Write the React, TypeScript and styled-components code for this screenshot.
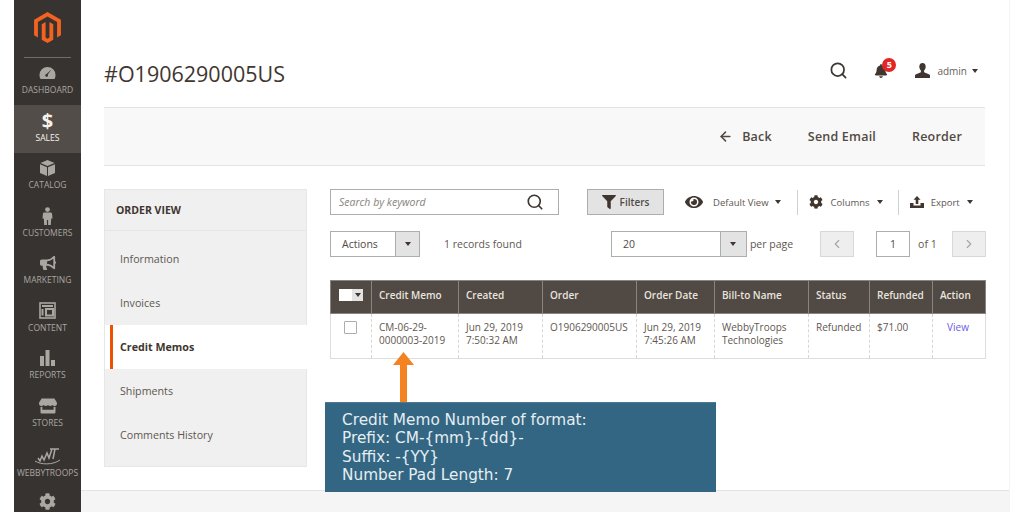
import React from "react";
import styled, { createGlobalStyle } from "styled-components";
import { SiMagento } from "react-icons/si";
import { FaBell, FaBullhorn, FaCog, FaEye, FaFilter, FaStore } from "react-icons/fa";
import { ArrowLeft, ChevronLeft, ChevronRight, Search } from "lucide-react";

const GlobalStyle = createGlobalStyle`
  html, body {
    margin: 0;
    padding: 0;
    background: #ffffff;
    font-family: "Open Sans", "Liberation Sans", sans-serif;
    color: #41362f;
  }
  * { box-sizing: border-box; }
`;

const Shell = styled.div`
  display: flex;
  height: 512px;
  width: 1024px;
  padding: 0 15px 0 14px;
  overflow: hidden;
  position: relative;
`;

const Sidebar = styled.nav`
  width: 67px;
  flex: none;
  background: #373330;
  display: flex;
  flex-direction: column;
  align-items: stretch;
`;

const LogoBox = styled.div`
  height: 56.5px;
  flex: none;
  padding-top: 12px;
  display: flex;
  justify-content: center;
  color: #f26322;
  font-size: 31px;
`;

const SideRule = styled.div`
  height: 1px;
  flex: none;
  margin: 0 10px;
  background: #736c64;
`;

const SideItem = styled.div<{ $active?: boolean; $tall?: boolean }>`
  height: ${(p) => (p.$tall ? "50px" : "47.5px")};
  flex: none;
  display: flex;
  flex-direction: column;
  align-items: center;
  justify-content: flex-end;
  padding-bottom: 10px;
  background: ${(p) => (p.$active ? "#524d49" : "transparent")};
  color: ${(p) => (p.$active ? "#f7f3eb" : "#aaa6a0")};
`;

const SideGear = styled.div`
  flex: none;
  display: flex;
  justify-content: center;
  padding-top: 5px;
  color: #aaa6a0;
`;

const SideIcon = styled.div`
  height: 22px;
  display: flex;
  align-items: center;
  justify-content: center;
  font-size: 16px;
`;

const Dollar = styled.span`
  font-size: 20px;
  font-weight: 700;
  line-height: 22px;
`;

const SideLabel = styled.span`
  font-size: 8.5px;
  line-height: 11px;
  text-transform: uppercase;
  white-space: nowrap;
`;

const Main = styled.main`
  flex: 1;
  min-width: 0;
  display: flex;
  flex-direction: column;
`;

const PageHeader = styled.header`
  height: 107px;
  flex: none;
  display: flex;
  align-items: center;
  padding: 40px 31px 0 23px;
`;

const Title = styled.h1`
  margin: 0;
  flex: 1;
  font-size: 21.5px;
  font-weight: 400;
  color: #41362f;
`;

const HeaderTools = styled.div`
  display: flex;
  align-items: center;
  margin-top: -6px;
`;

const BellWrap = styled.div`
  position: relative;
  margin: 0 27px 0 26px;
  display: flex;
  font-size: 14px;
  color: #41362f;
`;

const Badge = styled.span`
  position: absolute;
  top: -6px;
  left: 8px;
  width: 14px;
  height: 14px;
  border-radius: 50%;
  background: #e22626;
  color: #fff;
  font-size: 9px;
  font-weight: 700;
  line-height: 14px;
  text-align: center;
`;

const AdminName = styled.span`
  font-size: 10px;
  margin: 0 5px 0 7px;
  color: #675f58;
`;

const Caret = styled.span<{ $gap?: number }>`
  width: 0;
  height: 0;
  flex: none;
  margin-left: ${(p) => p.$gap ?? 0}px;
  border-left: 3.5px solid transparent;
  border-right: 3.5px solid transparent;
  border-top: 4px solid #41362f;
`;

const ActionBar = styled.div`
  height: 59px;
  flex: none;
  margin: 0 24px 0 23px;
  padding-right: 23px;
  background: #f8f8f8;
  border-top: 1px solid #e3e3e3;
  border-bottom: 1px solid #e3e3e3;
  display: flex;
  align-items: center;
  justify-content: flex-end;
  gap: 36px;
`;

const BarAction = styled.span`
  display: flex;
  align-items: center;
  gap: 9px;
  font-size: 12.5px;
  font-weight: 600;
  letter-spacing: 0.2px;
  color: #514943;
`;

const Content = styled.div`
  flex: 1;
  display: flex;
  gap: 23px;
  margin: 23px 23px 0 23px;
`;

const OrderPanel = styled.aside`
  width: 203px;
  height: 278px;
  flex: none;
  background: #f0f0f0;
  border: 1px solid #e6e6e6;
`;

const PanelTitle = styled.div`
  height: 41px;
  display: flex;
  align-items: center;
  padding-left: 11px;
  font-size: 10.5px;
  font-weight: 700;
  color: #41362f;
  border-bottom: 1px solid #e6e6e6;
`;

const PanelList = styled.div`
  padding-top: 6px;
`;

const PanelItem = styled.div<{ $active?: boolean }>`
  height: 44px;
  display: flex;
  align-items: stretch;
  padding-left: 5px;
  background: ${(p) => (p.$active ? "#ffffff" : "transparent")};
  margin-right: ${(p) => (p.$active ? "-1px" : "0")};
`;

const PanelLabel = styled.span<{ $active?: boolean }>`
  flex: 1;
  display: flex;
  align-items: center;
  padding-left: ${(p) => (p.$active ? "7px" : "10px")};
  border-left: ${(p) => (p.$active ? "3px solid #eb5202" : "none")};
  font-size: 10.7px;
  font-weight: ${(p) => (p.$active ? 700 : 400)};
  color: ${(p) => (p.$active ? "#41362f" : "#5e5751")};
`;

const GridArea = styled.section`
  flex: 1;
  min-width: 0;
`;

const ToolRow = styled.div`
  display: flex;
  align-items: center;
  height: 26px;
`;

const PagerRow = styled(ToolRow)`
  margin-top: 16px;
`;

const SearchBox = styled.div`
  width: 229px;
  height: 26px;
  flex: none;
  display: flex;
  align-items: center;
  justify-content: space-between;
  padding: 0 14px 0 8px;
  background: #fff;
  border: 1px solid #adadad;
  font-size: 10.5px;
  font-style: italic;
  color: #8a837d;
`;

const FilterButton = styled.div`
  width: 77px;
  height: 26px;
  flex: none;
  margin: 0 21px 0 28px;
  display: flex;
  align-items: center;
  justify-content: center;
  gap: 4px;
  background: #e3e3e3;
  border: 1px solid #adadad;
  font-size: 10px;
  font-weight: 600;
  color: #514943;
`;

const ToolLabel = styled.span<{ $left: number }>`
  display: flex;
  align-items: center;
  margin-left: ${(p) => p.$left}px;
  font-size: 9.5px;
  color: #5e5751;
  white-space: nowrap;
`;

const ToolDivider = styled.span<{ $left: number }>`
  width: 1px;
  height: 25px;
  flex: none;
  background: #d1d1d1;
  margin: 0 11px 0 ${(p) => p.$left}px;
`;

const SelectBox = styled.div<{ $width: number; $arrow: number }>`
  width: ${(p) => p.$width}px;
  height: 26px;
  flex: none;
  display: grid;
  grid-template-columns: 1fr ${(p) => p.$arrow}px;
  background: #fff;
  border: 1px solid #adadad;
`;

const SelectText = styled.span`
  display: flex;
  align-items: center;
  padding-left: 11px;
  font-size: 10.5px;
  color: #514943;
`;

const SelectArrow = styled.span`
  display: flex;
  align-items: center;
  justify-content: center;
  background: #e3e3e3;
  border-left: 1px solid #adadad;
`;

const PlainText = styled.span<{ $left?: number; $right?: number }>`
  margin-left: ${(p) => p.$left ?? 0}px;
  margin-right: ${(p) => p.$right ?? 0}px;
  font-size: 10.5px;
  color: #5e5751;
  white-space: nowrap;
`;

const PageButton = styled.div`
  width: 34px;
  height: 26px;
  flex: none;
  display: flex;
  align-items: center;
  justify-content: center;
  background: #eeeeee;
  border: 1px solid #d8d8d8;
  color: #a9a5a1;
`;

const PageInput = styled.div`
  width: 34px;
  height: 26px;
  flex: none;
  margin-left: 22px;
  display: flex;
  align-items: center;
  justify-content: center;
  background: #fff;
  border: 1px solid #adadad;
  font-size: 10.5px;
  color: #514943;
`;

const Table = styled.table`
  width: 655px;
  margin-top: 23px;
  table-layout: fixed;
  border-collapse: collapse;
  font-size: 10px;
`;

const Th = styled.th`
  height: 33px;
  padding: 0 0 5px 7px;
  background: #514943;
  border: 1px solid #8a837f;
  color: #e8e4df;
  font-size: 10px;
  font-weight: 600;
  text-align: left;
  white-space: nowrap;
`;

const Td = styled.td<{ $center?: boolean }>`
  height: 45px;
  padding: 7px 4px 0 7px;
  vertical-align: top;
  background: #fff;
  border-left: 1px dashed #d6d6d6;
  border-right: 1px dashed #d6d6d6;
  border-bottom: 1px solid #dedede;
  line-height: 13px;
  color: #5e5751;
  text-align: ${(p) => (p.$center ? "center" : "left")};
  padding-right: ${(p) => (p.$center ? "6px" : "4px")};
  padding-left: ${(p) => (p.$center ? "4px" : "7px")};
  &:first-child { border-left: 1px solid #dedede; }
  &:last-child { border-right: 1px solid #dedede; }
`;

const HeadCheck = styled.div`
  display: flex;
  width: 24px;
  height: 12px;
  margin-left: 1px;
`;

const HeadCheckBox = styled.span`
  width: 13px;
  background: #fff;
`;

const HeadCheckArrow = styled.span`
  flex: 1;
  display: flex;
  align-items: center;
  justify-content: center;
  background: #e3e3e3;
`;

const RowCheck = styled.div`
  width: 13px;
  height: 13px;
  margin: 0 0 0 6px;
  background: #fff;
  border: 1px solid #adadad;
  border-radius: 1px;
`;

const ViewLink = styled.span`
  color: #6b5be6;
`;

const Footer = styled.footer`
  height: 22px;
  flex: none;
  background: #f5f5f5;
  border-top: 1px solid #e3e3e3;
`;

const ArrowMark = styled.svg`
  position: absolute;
  left: 393px;
  top: 352px;
`;

const Callout = styled.div`
  position: absolute;
  left: 325px;
  top: 402px;
  width: 391px;
  height: 90px;
  padding: 8px 17px;
  background: #336683;
  border-top: 1px solid #4d7a94;
  font-family: "DejaVu Sans", sans-serif;
  font-size: 15.3px;
  line-height: 18.4px;
  color: #e6eef2;
`;

const RightEdge = styled.div`
  position: absolute;
  right: 14px;
  top: 0;
  bottom: 0;
  width: 1px;
  background: #f4f4f4;
`;

function GaugeIcon() {
  return (
    <svg width="17" height="14" viewBox="0 0 17 14" fill="currentColor">
      <path d="M8.5 1A8 8 0 0 0 .5 9c0 1.6.4 3 1.1 4h13.8c.7-1 1.1-2.4 1.1-4a8 8 0 0 0-8-8z" />
      <path d="M12.5 3.5 8.8 8.6a1.4 1.4 0 1 1-1.3-.6z" fill="#373330" />
    </svg>
  );
}

function BoxIcon() {
  return (
    <svg width="15" height="16" viewBox="0 0 15 16" fill="currentColor">
      <path d="M7.5 0 14.5 3 7.5 6 .5 3z" />
      <path d="M0 4.2 7 7.2V16L0 13zM15 4.2 8 7.2V16l7-3z" />
    </svg>
  );
}

function PersonIcon() {
  return (
    <svg width="11" height="18" viewBox="0 0 11 18" fill="currentColor">
      <circle cx="5.5" cy="2.6" r="2.4" />
      <path d="M2.5 5.5h6c1 0 1.6.7 1.6 1.6l.4 4.4H9.2L8.8 18H6.1v-5H4.9v5H2.2l-.4-6.5H.5l.4-4.4c0-.9.6-1.6 1.6-1.6z" />
    </svg>
  );
}

function ContentIcon() {
  return (
    <svg width="17" height="17" viewBox="0 0 17 17" fill="none" stroke="currentColor">
      <rect x="1" y="1" width="15" height="15" strokeWidth="1.6" />
      <path d="M3 4h11M3.5 7v6.5M7 7h7v6.5H7z" strokeWidth="2" />
    </svg>
  );
}

function BarsIcon() {
  return (
    <svg width="15" height="16" viewBox="0 0 15 16" fill="currentColor">
      <rect x="0" y="6" width="4" height="10" />
      <rect x="5.5" y="0" width="4" height="16" />
      <rect x="11" y="10" width="4" height="6" />
    </svg>
  );
}

function TroopsIcon() {
  return (
    <svg width="28" height="18" viewBox="0 0 28 18" fill="none" stroke="currentColor" strokeWidth="1.5">
      <path d="M4 11 6 14 8 9 10 13 13 6 15 11 18 2M16 2h9M21 2 19 12" />
      <path d="M1 14c6 4 18 4 25-1" strokeWidth="1" />
    </svg>
  );
}

function UserIcon() {
  return (
    <svg width="15" height="15" viewBox="0 0 15 15" fill="#41362f">
      <path d="M7.5 0C5.4 0 4.3 1.5 4.3 3.6c0 1.7.7 3.1 1.6 4v1.6L.6 11.6c-.4.2-.6.6-.6 1V15h15v-2.4c0-.4-.2-.8-.6-1L9.1 9.2V7.6c.9-.9 1.6-2.3 1.6-4C10.700 1.500 9.600 0 7.500 0z" />
    </svg>
  );
}

function ExportIcon() {
  return (
    <svg width="14" height="12" viewBox="0 0 14 12" fill="#41362f">
      <path d="M7 0 10.500 3.800H8.300V8H5.700V3.800H3.500z" />
      <path d="M0 7h3.500v2.500h7V7H14v5H0z" />
    </svg>
  );
}

const navItems: { label: string; icon: React.ReactNode; active?: boolean; tall?: boolean }[] = [
  { label: "Dashboard", icon: <GaugeIcon /> },
  { label: "Sales", icon: <Dollar>$</Dollar>, active: true },
  { label: "Catalog", icon: <BoxIcon /> },
  { label: "Customers", icon: <PersonIcon /> },
  { label: "Marketing", icon: <FaBullhorn /> },
  { label: "Content", icon: <ContentIcon /> },
  { label: "Reports", icon: <BarsIcon /> },
  { label: "Stores", icon: <FaStore size={18} /> },
  { label: "WebbyTroops", icon: <TroopsIcon />, tall: true },
];

const panelItems = ["Information", "Invoices", "Credit Memos", "Shipments", "Comments History"];

const columns = [41, 87, 84, 94, 78, 94, 61, 63, 53];
const headings = ["Credit Memo", "Created", "Order", "Order Date", "Bill-to Name", "Status", "Refunded", "Action"];

export default function App() {
  return (
    <>
      <GlobalStyle />
      <Shell>
        <Sidebar>
          <LogoBox>
            <SiMagento />
          </LogoBox>
          <SideRule />
          {navItems.map((item) => (
            <SideItem key={item.label} $active={item.active} $tall={item.tall}>
              <SideIcon>{item.icon}</SideIcon>
              <SideLabel>{item.label}</SideLabel>
            </SideItem>
          ))}
          <SideGear>
            <FaCog size={17} />
          </SideGear>
        </Sidebar>
        <Main>
          <PageHeader>
            <Title>#O1906290005US</Title>
            <HeaderTools>
              <Search size={19} color="#41362f" strokeWidth={2.2} />
              <BellWrap>
                <FaBell />
                <Badge>5</Badge>
              </BellWrap>
              <UserIcon />
              <AdminName>admin</AdminName>
              <Caret />
            </HeaderTools>
          </PageHeader>
          <ActionBar>
            <BarAction>
              <ArrowLeft size={15} strokeWidth={2.4} />
              Back
            </BarAction>
            <BarAction>Send Email</BarAction>
            <BarAction>Reorder</BarAction>
          </ActionBar>
          <Content>
            <OrderPanel>
              <PanelTitle>ORDER VIEW</PanelTitle>
              <PanelList>
                {panelItems.map((name) => (
                  <PanelItem key={name} $active={name === "Credit Memos"}>
                    <PanelLabel $active={name === "Credit Memos"}>{name}</PanelLabel>
                  </PanelItem>
                ))}
              </PanelList>
            </OrderPanel>
            <GridArea>
              <ToolRow>
                <SearchBox>
                  Search by keyword
                  <Search size={18} color="#41362f" strokeWidth={2.2} />
                </SearchBox>
                <FilterButton>
                  <FaFilter size={14} color="#41362f" />
                  Filters
                </FilterButton>
                <FaEye size={18} color="#41362f" />
                <ToolLabel $left={10}>Default View</ToolLabel>
                <Caret $gap={6} />
                <ToolDivider $left={16} />
                <FaCog size={14} color="#41362f" />
                <ToolLabel $left={8}>Columns</ToolLabel>
                <Caret $gap={7} />
                <ToolDivider $left={15} />
                <ExportIcon />
                <ToolLabel $left={7}>Export</ToolLabel>
                <Caret $gap={7} />
              </ToolRow>
              <PagerRow>
                <SelectBox $width={90} $arrow={24}>
                  <SelectText>Actions</SelectText>
                  <SelectArrow>
                    <Caret />
                  </SelectArrow>
                </SelectBox>
                <PlainText $left={24} $right={89}>1 records found</PlainText>
                <SelectBox $width={136} $arrow={26}>
                  <SelectText>20</SelectText>
                  <SelectArrow>
                    <Caret />
                  </SelectArrow>
                </SelectBox>
                <PlainText $left={3} $right={27}>per page</PlainText>
                <PageButton>
                  <ChevronLeft size={14} />
                </PageButton>
                <PageInput>1</PageInput>
                <PlainText $left={8} $right={15}>of 1</PlainText>
                <PageButton>
                  <ChevronRight size={14} />
                </PageButton>
              </PagerRow>
              <Table>
                <colgroup>
                  {columns.map((w, i) => (
                    <col key={i} width={w} />
                  ))}
                </colgroup>
                <thead>
                  <tr>
                    <Th>
                      <HeadCheck>
                        <HeadCheckBox />
                        <HeadCheckArrow>
                          <Caret />
                        </HeadCheckArrow>
                      </HeadCheck>
                    </Th>
                    {headings.map((h) => (
                      <Th key={h}>{h}</Th>
                    ))}
                  </tr>
                </thead>
                <tbody>
                  <tr>
                    <Td>
                      <RowCheck />
                    </Td>
                    <Td>
                      CM-06-29-
                      <br />
                      0000003-2019
                    </Td>
                    <Td>
                      Jun 29, 2019
                      <br />
                      7:50:32 AM
                    </Td>
                    <Td>O1906290005US</Td>
                    <Td>
                      Jun 29, 2019
                      <br />
                      7:45:26 AM
                    </Td>
                    <Td>
                      WebbyTroops
                      <br />
                      Technologies
                    </Td>
                    <Td>Refunded</Td>
                    <Td>$71.00</Td>
                    <Td $center>
                      <ViewLink>View</ViewLink>
                    </Td>
                  </tr>
                </tbody>
              </Table>
            </GridArea>
          </Content>
          <Footer />
        </Main>
        <RightEdge />
        <ArrowMark width="21" height="50" viewBox="0 0 21 50">
          <path d="M10.500 0 21 13H14V50H7V13H0z" fill="#f58220" />
        </ArrowMark>
        <Callout>
          Credit Memo Number of format:
          <br />
          Prefix: CM-{"{mm}"}-{"{dd}"}-
          <br />
          Suffix: -{"{YY}"}
          <br />
          Number Pad Length: 7
        </Callout>
      </Shell>
    </>
  );
}
